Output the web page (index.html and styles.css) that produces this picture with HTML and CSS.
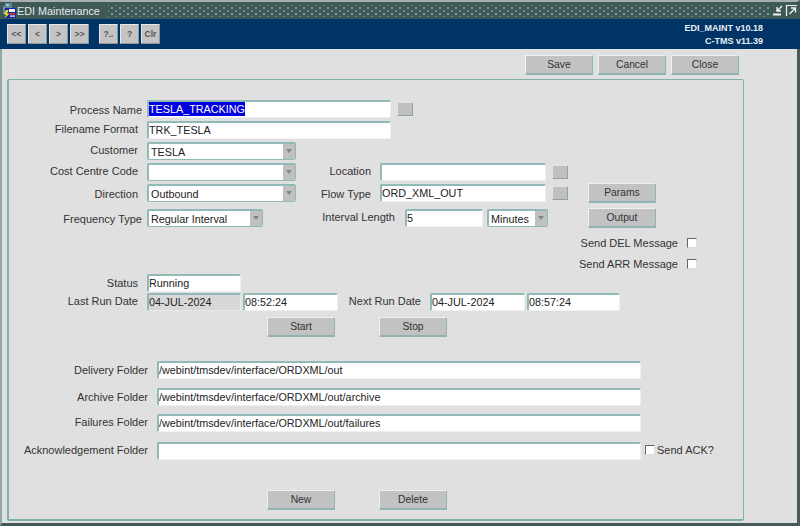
FILE: index.html
```html
<!DOCTYPE html>
<html lang="en">
<head>
<meta charset="utf-8">
<title>EDI Maintenance</title>
<link rel="stylesheet" href="styles.css">
</head>
<body>
<div class="window">
  <div class="titlebar">
    <svg class="app-icon" width="15" height="15" viewBox="0 0 15 15">
      <rect x="3" y="0" width="7" height="5" fill="#5f8a90"/>
      <rect x="4" y="1" width="3" height="2" fill="#a8c4d0"/>
      <rect x="1" y="3" width="3" height="8" fill="#6a8aa8"/>
      <rect x="3" y="5" width="11" height="10" fill="#1828a0"/>
      <rect x="7" y="6" width="6" height="3" fill="#f4f4f4"/>
      <rect x="8" y="10" width="5" height="1.6" fill="#e03030"/>
      <rect x="8" y="12.4" width="5" height="1.4" fill="#f0d0d0"/>
      <path d="M4 7 L6.5 7 L5 10.5 L7.5 10.5 L3 15 L4 11.5 L2 11.5 Z" fill="#f4e420"/>
    </svg>
    <span class="title">EDI Maintenance</span>
    <span class="dots"></span>
    <svg class="win-icon" width="13" height="13" viewBox="0 0 13 13">
      <path d="M10 2 L5.5 6.5 M5 3 V7 H9" fill="none" stroke="#f2f2f2" stroke-width="1.4"/>
      <path d="M1 10.5 H9" fill="none" stroke="#f2f2f2" stroke-width="2"/>
    </svg>
    <svg class="win-icon" width="13" height="13" viewBox="0 0 13 13">
      <path d="M1.5 12 V1.5 H12" fill="none" stroke="#f2f2f2" stroke-width="1.2"/>
      <path d="M4.5 10 L10 4.5 M6 4 H10.5 V8.5" fill="none" stroke="#f2f2f2" stroke-width="1.3"/>
    </svg>
  </div>

  <div class="toolbar">
    <div class="tool-group">
      <button class="tool">&lt;&lt;</button>
      <button class="tool">&lt;</button>
      <button class="tool">&gt;</button>
      <button class="tool">&gt;&gt;</button>
    </div>
    <div class="tool-group">
      <button class="tool">?..</button>
      <button class="tool">?</button>
      <button class="tool">Clr</button>
    </div>
    <div class="version">
      <div>EDI_MAINT v10.18</div>
      <div>C-TMS v11.39</div>
    </div>
  </div>

  <div class="actions">
    <button class="btn">Save</button>
    <button class="btn">Cancel</button>
    <button class="btn">Close</button>
  </div>

  <div class="panel">
    <div class="row">
      <label class="lbl tight down">Process Name</label>
      <div class="field w244"><span class="selected">TESLA_TRACKING</span></div>
      <button class="lov lov-first"></button>
    </div>
    <div class="row mt3">
      <label class="lbl up">Filename Format</label>
      <div class="field w244">TRK_TESLA</div>
    </div>
    <div class="row mt3">
      <label class="lbl up">Customer</label>
      <div class="select w149"><span>TESLA</span><i class="arrow"></i></div>
    </div>
    <div class="row mt3">
      <label class="lbl up">Cost Centre Code</label>
      <div class="select w149"><span></span><i class="arrow"></i></div>
      <label class="lbl col2 up">Location</label>
      <div class="field w166"></div>
      <button class="lov"></button>
    </div>
    <div class="row mt3">
      <label class="lbl down">Direction</label>
      <div class="select w149"><span>Outbound</span><i class="arrow"></i></div>
      <label class="lbl col2 down">Flow Type</label>
      <div class="field w166">ORD_XML_OUT</div>
      <button class="lov"></button>
      <button class="btn side-a">Params</button>
    </div>
    <div class="row mt7">
      <label class="lbl tight down">Frequency Type</label>
      <div class="select w116"><span>Regular Interval</span><i class="arrow"></i></div>
      <label class="lbl col3 up">Interval Length</label>
      <div class="field w78">5</div>
      <div class="select w61 ml4"><span>Minutes</span><i class="arrow"></i></div>
      <button class="btn side-b">Output</button>
    </div>
    <div class="check-row mt11">
      <label class="check-label">Send DEL Message</label>
      <i class="check"></i>
    </div>
    <div class="check-row mt9">
      <label class="check-label">Send ARR Message</label>
      <i class="check"></i>
    </div>
    <div class="row mt3">
      <label class="lbl">Status</label>
      <div class="field w94">Running</div>
    </div>
    <div class="row mt1">
      <label class="lbl up">Last Run Date</label>
      <div class="field w94 readonly">04-JUL-2024</div>
      <div class="field w95 ml2">08:52:24</div>
      <label class="lbl col4 up">Next Run Date</label>
      <div class="field w95">04-JUL-2024</div>
      <div class="field w93 ml2">08:57:24</div>
    </div>
    <div class="buttons-row mt6">
      <button class="btn">Start</button>
      <button class="btn">Stop</button>
    </div>
    <div class="row mt24">
      <label class="lbl wide">Delivery Folder</label>
      <div class="field w484">/webint/tmsdev/interface/ORDXML/out</div>
    </div>
    <div class="row mt9">
      <label class="lbl wide">Archive Folder</label>
      <div class="field w484">/webint/tmsdev/interface/ORDXML/out/archive</div>
    </div>
    <div class="row mt8">
      <label class="lbl wide up">Failures Folder</label>
      <div class="field w484">/webint/tmsdev/interface/ORDXML/out/failures</div>
    </div>
    <div class="row mt10">
      <label class="lbl wide up">Acknowledgement Folder</label>
      <div class="field w484"></div>
      <i class="check ml4"></i>
      <label class="ack-label up">Send ACK?</label>
    </div>
    <div class="buttons-row mt30">
      <button class="btn">New</button>
      <button class="btn">Delete</button>
    </div>
  </div>
</div>
</body>
</html>
```

FILE: styles.css
```css
* { box-sizing: border-box; }
html, body { margin: 0; padding: 0; background: #fff; }
body { width: 800px; height: 529px; overflow: hidden; font-family: "Liberation Sans", Arial, sans-serif; font-size: 10.8px; color: #333; }
button { font-family: inherit; padding: 0; margin: 0; }
label { display: block; font-size: 11px; line-height: 14px; }

.window { width: 800px; height: 526px; background: #e0e0e0; border-top: 2px solid #a8b0b0; border-left: 2px solid #8fa8a8; border-right: 3px solid #4a5a5a; border-bottom: 3px solid #47585a; display: flex; flex-direction: column; }

.titlebar { height: 17px; background: #3f5858; display: flex; align-items: center; color: #e4ecec; font-size: 10.8px; flex: none; margin-left: -2px; margin-right: -3px; padding-right: 2px; }
.app-icon { margin-left: 2px; flex: none; }
.title { flex: none; }
.dots { flex: 1; height: 12px; margin: 0 3px 0 8px; background-image: radial-gradient(circle, #7f9f9d 0.7px, transparent 1.1px), radial-gradient(circle, #6a8a88 0.7px, transparent 1.1px); background-size: 8px 6px; background-position: 0 0, 4px 3px; }
.win-icon { flex: none; }

.toolbar { height: 30px; background: #003366; display: flex; align-items: flex-start; padding: 5px 37px 0 7px; flex: none; margin-left: -2px; margin-right: -3px; }
.tool-group { display: flex; gap: 2px; margin-right: 10px; }
.tool { width: 19px; height: 20px; background: #c4c4c4; border: 1px solid; border-color: #e8e8e8 #8a9a9a #8a9a9a #e8e8e8; border-radius: 1px; color: #555; font-size: 8.5px; font-weight: bold; }
.version { margin-left: auto; margin-top: -2px; color: #e8eef4; font-size: 9px; font-weight: bold; text-align: right; line-height: 13px; }

.actions { height: 30px; flex: none; display: flex; justify-content: flex-end; gap: 5px; padding: 6px 58px 0 0; }

.panel { width: 737px; height: 442px; margin-left: 5px; border: 1px solid #7fb0ac; border-left-width: 2px; border-bottom-width: 2px; border-radius: 2px; padding-top: 20px; flex: none; }

.row { display: flex; align-items: center; height: 18px; }
.mt1 { margin-top: 1px; } .mt3 { margin-top: 3px; } .mt6 { margin-top: 6px; } .mt7 { margin-top: 7px; }
.mt8 { margin-top: 8px; } .mt9 { margin-top: 9px; } .mt10 { margin-top: 10px; } .mt11 { margin-top: 11px; }
.mt24 { margin-top: 24px; } .mt30 { margin-top: 30px; }
.ml2 { margin-left: 2px; } .ml4 { margin-left: 4px; }

.lbl { flex: none; width: 138px; padding-right: 9px; text-align: right; white-space: nowrap; }
.lbl.tight { padding-right: 5px; }
.lbl.wide { width: 148px; }
.lbl.col2 { width: 84px; }
.lbl.col3 { width: 142px; padding-right: 10px; }
.lbl.col4 { width: 92px; }
.up { padding-bottom: 2px; }
.down { padding-top: 2px; }

.field, .select { flex: none; height: 18px; background: #fff; border: 1px solid; border-color: #8fbab6 #f0f0f0 #f0f0f0 #8fbab6; border-top-width: 2px; border-left-width: 2px; border-radius: 2px; line-height: 14px; white-space: nowrap; overflow: hidden; color: #222; }
.field.readonly { background: #d8d8d8; border-color: #8fbab6 #e8e8e8 #e8e8e8 #8fbab6; }
.selected { background: #0000e0; color: #fff; display: inline-block; }

.select { display: flex; justify-content: space-between; padding-left: 2px; line-height: 16px; border-right: 1px solid #8fbab6; border-bottom: 1px solid #8fbab6; }
.arrow { width: 12px; background: #c0c0c0; position: relative; flex: none; }
.arrow::after { content: ""; position: absolute; left: 3px; top: 5px; border-left: 3px solid transparent; border-right: 3px solid transparent; border-top: 4px solid #808888; }

.w78 { width: 78px; } .w93 { width: 93px; } .w94 { width: 94px; } .w95 { width: 95px; }
.w61 { width: 61px; } .w116 { width: 116px; } .w149 { width: 149px; } .w166 { width: 166px; }
.w244 { width: 244px; } .w484 { width: 484px; }

.lov { flex: none; width: 16px; height: 14px; background: #c0c0c0; border: 1px solid; border-color: #e4e4e4 #8aa5a3 #8aa5a3 #e4e4e4; border-radius: 1px; margin-left: 6px; }

.btn { flex: none; width: 68px; height: 20px; background: #c2c2c2; border: 1px solid; border-color: #f0f0f0 #8fb5b3 #8fb5b3 #f0f0f0; border-bottom-width: 2px; border-radius: 1px; color: #333; font-size: 10.3px; }
.side-a { margin-left: 20px; }
.side-b { margin-left: 40px; }

.check-row { display: flex; justify-content: flex-end; align-items: center; height: 12px; padding-right: 46px; }
.check-label { margin-right: 9px; padding-bottom: 2px; }
.check { flex: none; display: block; width: 10px; height: 10px; margin-bottom: 2px; background: #fff; border: 1px solid; border-color: #666 #ddd #ddd #666; }
.ack-label { margin-left: 2px; }

.buttons-row { display: flex; gap: 44px; padding-left: 258px; }
```
